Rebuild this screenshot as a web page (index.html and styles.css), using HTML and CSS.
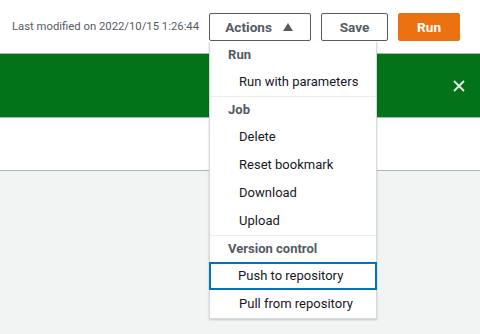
FILE: index.html
```html
<!DOCTYPE html>
<html lang="en">
<head>
  <meta charset="UTF-8" />
  <title>Job editor</title>
  <link rel="stylesheet" href="styles.css">
</head>
<body>
  <div class="toolbar">
    <span class="modified">Last modified on 2022/10/15 1:26:44</span>
    <div class="actions">
      <button class="btn btn-actions">Actions <span class="caret"></span></button>
      <div class="menu">
        <div class="group-title">Run</div>
        <div class="item">Run with parameters</div>
        <div class="group-title sep">Job</div>
        <div class="item">Delete</div>
        <div class="item">Reset bookmark</div>
        <div class="item">Download</div>
        <div class="item">Upload</div>
        <div class="group-title sep">Version control</div>
        <div class="item focused">Push to repository</div>
        <div class="item">Pull from repository</div>
      </div>
    </div>
    <button class="btn btn-save">Save</button>
    <button class="btn btn-primary">Run</button>
  </div>

  <div class="flash">
    <svg class="close" width="12" height="12" viewBox="0 0 12 12">
      <path d="M1 1 L11 11 M11 1 L1 11" stroke="#e8f0e9" stroke-width="1.8" fill="none"/>
    </svg>
  </div>

  <div class="panel"></div>
  <div class="page"></div>
</body>
</html>
```

FILE: styles.css
```css
body {
  margin: 0;
  font-family: Roboto, Arial, sans-serif;
  color: #16191f;
  background: #f2f3f3;
  height: 334px;
  overflow: hidden;
}

.toolbar {
  display: flex;
  align-items: center;
  height: 53px;
  padding: 0 21px 0 12px;
  background: #fff;
  gap: 10px;
}

.modified {
  font-size: 11.3px;
  color: #545b64;
  margin-right: auto;
  white-space: nowrap;
}

.actions {
  position: relative;
  flex-shrink: 0;
}

.btn {
  flex-shrink: 0;
  height: 28px;
  box-sizing: border-box;
  border: 1px solid #545b64;
  border-radius: 2px;
  background: #fff;
  color: #545b64;
  font-family: inherit;
  font-size: 13.6px;
  font-weight: 700;
  padding: 0;
  display: flex;
  align-items: center;
  justify-content: center;
}

.btn-actions {
  width: 102px;
  gap: 11px;
  padding-right: 2px;
}

.btn-save {
  width: 67px;
}

.caret {
  width: 0;
  height: 0;
  border-left: 5px solid transparent;
  border-right: 5px solid transparent;
  border-bottom: 8px solid #545b64;
}

.btn-primary {
  background: #ec7211;
  border-color: #ec7211;
  color: #fff;
  width: 62px;
}

.menu {
  position: absolute;
  top: 29px;
  left: 0;
  width: 168px;
  box-sizing: border-box;
  background: #fff;
  border: 1px solid #d5dbdb;
  border-top: none;
  box-shadow: 0 1px 2px rgba(0, 22, 40, 0.2);
  z-index: 2;
  font-size: 13px;
}

.group-title {
  font-weight: 700;
  color: #545b64;
  padding: 3px 18px;
  line-height: 20px;
}

.sep {
  border-top: 1px solid #eaeded;
}

.item {
  padding: 4px 29px;
  line-height: 20px;
  white-space: nowrap;
}

.item.focused {
  padding: 2px 27px;
  border: 2px solid #0073bb;
  margin: 0 -1px;
}

.flash {
  height: 63px;
  background: #037319;
  border-top: 1px solid #aab7b8;
  border-bottom: 1px solid #aab7b8;
  display: flex;
  align-items: center;
  justify-content: flex-end;
  padding-right: 15px;
}

.panel {
  height: 52px;
  background: #fff;
  border-bottom: 1px solid #aab7b8;
}
```
